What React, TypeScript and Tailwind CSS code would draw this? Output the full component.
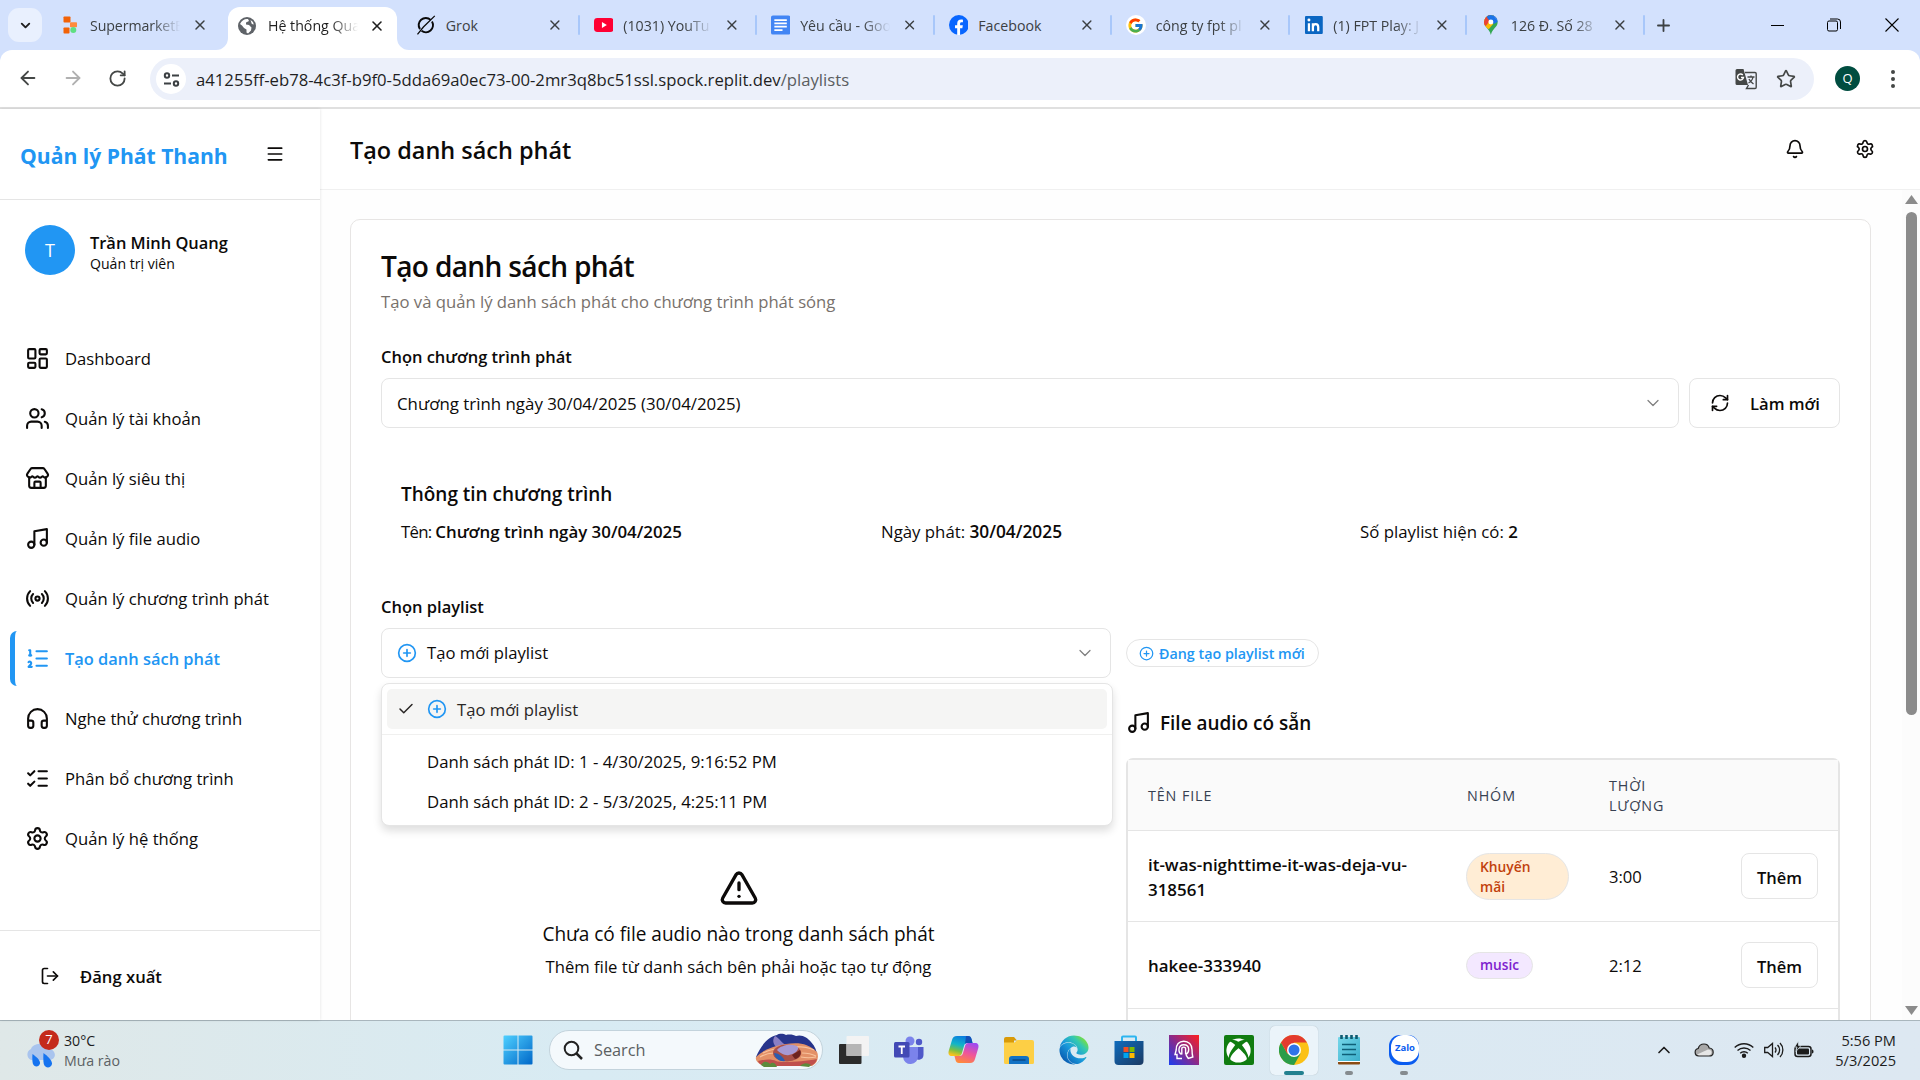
import type { ReactNode } from "react";
import {
  Bell, Check, ChevronDown, CirclePlus, Headphones, LayoutDashboard, ListChecks, ListOrdered,
  LogOut, Menu, Music, Radio, RefreshCw, Settings, Store, TriangleAlert, Users, X, Plus,
  ArrowLeft, ArrowRight, RotateCw, Star, ChevronUp,
} from "lucide-react";
import { FcGoogle } from "react-icons/fc";
import { FaEdge, FaXbox } from "react-icons/fa";

/* ---------- favicons ---------- */

const ReplitIcon = () => (
  <svg width="20" height="20" viewBox="0 0 20 20">
    <rect x="3.5" y="1.5" width="7" height="6" rx="0.8" fill="#f26207" />
    <rect x="10" y="7.2" width="7" height="5" rx="0.8" fill="#ff8a3c" />
    <rect x="3.5" y="12.5" width="6" height="6" rx="0.8" fill="#f26207" />
    <circle cx="13.3" cy="15" r="3" fill="#5fdf82" />
  </svg>
);

const GlobeIcon = () => (
  <svg width="20" height="20" viewBox="0 0 20 20">
    <circle cx="10" cy="10" r="9" fill="#5f6368" />
    <path d="M3 8c2-4 5-5.500 8-5l1 2-3 1.500v2l3 .5 2.500 2.500-.5 3-3 3-1.500-1v-3L7 12 5 9.500z" fill="#fff" />
    <path d="M13.500 4l2.500 2 .8 2.500-2-.5z" fill="#fff" />
  </svg>
);

const GrokIcon = () => (
  <svg width="20" height="20" viewBox="0 0 20 20" fill="none" stroke="#0a0a0a">
    <path d="M14.800 4.800A7.200 7.200 0 0 0 4 14.200M5.600 15.800A7.200 7.200 0 0 0 16.200 6.500" strokeWidth="2" />
    <path d="M1.500 19.500L7.500 12L19 .8" strokeWidth="1.300" />
  </svg>
);

const YoutubeIcon = () => (
  <svg width="20" height="20" viewBox="0 0 20 20">
    <rect x="0" y="3" width="20" height="14" rx="3.500" fill="#ff0033" />
    <path d="M8 7l5 3-5 3z" fill="#fff" />
  </svg>
);

const DocsIcon = () => (
  <svg width="20" height="20" viewBox="0 0 20 20">
    <rect x="0" y="0" width="20" height="20" rx="2" fill="#4285f4" />
    <path d="M3.500 4.800h13M3.500 8.300h13M3.500 11.800h13M3.500 15.300h8.500" stroke="#fff" strokeWidth="1.800" />
  </svg>
);

const FacebookIcon = () => (
  <svg width="20" height="20" viewBox="0 0 20 20">
    <circle cx="10" cy="10" r="10" fill="#0866ff" />
    <path d="M8.300 20v-6.800H6.100v-3h2.200V8.700c0-3 1.500-4.300 4-4.300.8 0 1.400.1 1.800.2v2.700h-1.300c-1.200 0-1.600.6-1.600 1.600v1.300h2.800l-.5 3h-2.300V20z" fill="#fff" />
  </svg>
);

const GoogleTabIcon = () => (
  <div className="flex h-5 w-5 items-center justify-center rounded-full bg-white">
    <FcGoogle size={17} />
  </div>
);

const LinkedinIcon = () => (
  <svg width="20" height="20" viewBox="0 0 20 20">
    <rect x="1" y="1" width="18" height="18" rx="1" fill="#0a66c2" />
    <path d="M5 8.200v8M9 16.200v-8M9 12c0-2 1-3 2.800-3s2.600 1.200 2.600 3.200v4" stroke="#fff" strokeWidth="2.300" fill="none" />
    <circle cx="5" cy="4.900" r="1.500" fill="#fff" />
  </svg>
);

const MapsIcon = () => (
  <svg width="20" height="20" viewBox="0 0 20 20">
    <defs>
      <clipPath id="pin">
        <path d="M10 0a7 7 0 0 1 7 7c0 5-5.300 6.300-7 13C8.300 13.300 3 12 3 7a7 7 0 0 1 7-7z" />
      </clipPath>
    </defs>
    <g clipPath="url(#pin)">
      <rect width="20" height="20" fill="#34a853" />
      <path d="M0 0h20L8 14 0 12z" fill="#fbbc04" />
      <path d="M0 0h9l1 4-5 7-5-2z" fill="#ea4335" />
      <path d="M5 0h15v5l-7 4-6-5z" fill="#1a73e8" />
      <path d="M12 0h8v7l-5-3z" fill="#4285f4" />
    </g>
    <circle cx="10" cy="7" r="2.500" fill="#fff" />
  </svg>
);

/* ---------- browser chrome ---------- */

const otherTabs: { icon: ReactNode; title: string; fade: boolean }[] = [
  { icon: <GrokIcon />, title: "Grok", fade: false },
  { icon: <YoutubeIcon />, title: "(1031) YouTu", fade: true },
  { icon: <DocsIcon />, title: "Yêu cầu - Goo", fade: true },
  { icon: <FacebookIcon />, title: "Facebook", fade: false },
  { icon: <GoogleTabIcon />, title: "công ty fpt pl", fade: true },
  { icon: <LinkedinIcon />, title: "(1) FPT Play: J", fade: true },
  { icon: <MapsIcon />, title: "126 Đ. Số 28", fade: true },
];

const fadeMask = "[mask-image:linear-gradient(to_right,#000_70%,transparent_100%)]";

function TabStrip() {
  return (
    <div className="flex h-[50px] bg-[#d3e1fd] text-[14.200px] text-[#3c4043]">
      <div className="mt-2 ml-2 flex h-[34px] w-[34px] items-center justify-center rounded-[11px] bg-[#e9f0fe]">
        <ChevronDown size={15} strokeWidth={3} color="#1f1f1f" />
      </div>
      <div className="flex h-[50px] w-[186px] items-center pl-[18px]">
        <ReplitIcon />
        <span className={`ml-2.5 w-[90px] pt-px tracking-[-0.100px] whitespace-nowrap ${fadeMask}`}>SupermarketB</span>
        <X className="ml-[12px]" size={16} strokeWidth={2.2} />
      </div>
      <div className="relative mt-[7px] flex h-[43px] w-[169px] items-center rounded-t-[12px] bg-white pb-[6px] pl-[9px] text-[#1f1f1f]">
        <svg className="absolute bottom-0 -left-3" width="12" height="12"><path d="M0 12A12 12 0 0 0 12 0V12z" fill="#fff" /></svg>
        <svg className="absolute -right-3 bottom-0" width="12" height="12"><path d="M12 12A12 12 0 0 1 0 0V12z" fill="#fff" /></svg>
        <GlobeIcon />
        <span className={`ml-[11px] w-[90px] pt-px whitespace-nowrap ${fadeMask}`}>Hệ thống Qua</span>
        <X className="ml-[11px]" size={16} strokeWidth={2.4} />
      </div>
      <div className="flex pl-[5px]">
        {otherTabs.map((t) => (
          <div key={t.title} className="flex h-[50px] w-[177.500px] items-center pl-[14px]">
            {t.icon}
            <span className={`ml-[10px] w-[90px] pt-px whitespace-nowrap ${t.fade ? fadeMask : ""}`}>{t.title}</span>
            <X className="ml-[12px]" size={16} strokeWidth={2.2} />
            <div className="ml-[15px] h-5 w-[2px] shrink-0 rounded bg-[#a8c7fa]" />
          </div>
        ))}
      </div>
      <div className="flex items-center pl-[9px]">
        <Plus size={19} strokeWidth={2.300} />
      </div>
      <div className="ml-auto flex items-center pr-[21px] text-black">
        <svg width="13" height="13"><path d="M0 6.500h13" stroke="currentColor" /></svg>
        <svg className="ml-[43px]" width="14" height="14" fill="none" stroke="currentColor">
          <rect x="0.500" y="3" width="10" height="10" rx="1.500" />
          <path d="M3 1h7.500a3 3 0 0 1 3 3v7" />
        </svg>
        <svg className="ml-[44px]" width="14" height="14"><path d="M.5 .5l13 13M13.500 .5l-13 13" stroke="currentColor" strokeWidth="1.100" /></svg>
      </div>
    </div>
  );
}

function Toolbar() {
  return (
    <div className="bg-[#d3e1fd]">
      <div className="flex h-[59px] items-start rounded-t-[12px] border-b-2 border-[#e0e0e0] bg-white pt-2">
        <div className="flex h-[42px] items-center pb-[2px] pl-[17px] text-[#444746]">
          <ArrowLeft size={22} strokeWidth={2} />
          <ArrowRight className="ml-[23px] text-[#b0b0b0]" size={22} strokeWidth={2} />
          <RotateCw className="ml-[24px]" size={19} strokeWidth={2.300} />
        </div>
        <div className="ml-[23px] flex h-[42px] w-[1664px] items-center rounded-full bg-[#ecf0fa]">
          <div className="ml-[6px] flex h-[30px] w-[30px] items-center justify-center rounded-full bg-white">
            <svg width="17" height="17" fill="none" stroke="#3c4043" strokeWidth="2">
              <circle cx="4" cy="4.500" r="2.200" /><path d="M9 4.500h7M1 12.500h7" /><circle cx="13" cy="12.500" r="2.200" />
            </svg>
          </div>
          <span className="ml-[10px] pt-[2px] text-[16.700px] text-[#1f1f1f]">
            a41255ff-eb78-4c3f-b9f0-5dda69a0ec73-00-2mr3q8bc51ssl.spock.replit.dev<span className="text-[#5a5d60]">/playlists</span>
          </span>
          <svg className="ml-auto" width="22" height="22" viewBox="0 0 22 22">
            <path d="M2 1h6.500l4.500 16H2a1.500 1.500 0 0 1-1.500-1.500v-13A1.500 1.500 0 0 1 2 1z" fill="#444746" />
            <path d="M10 4.500h10a1.200 1.200 0 0 1 1.200 1.200v13.600a1.200 1.200 0 0 1-1.200 1.200h-8.500l2-3.500" fill="none" stroke="#444746" strokeWidth="1.400" />
            <path d="M7.800 7A3 3 0 1 0 8.500 9.500H6" fill="none" stroke="#fff" strokeWidth="1.400" />
            <path d="M12.500 9h7M16 7.500V9M18 9c-.5 3-2.500 5-4.500 6M14 11c.8 2 2.500 3.500 4.500 5" fill="none" stroke="#444746" strokeWidth="1.300" />
          </svg>
          <Star className="mr-[18px] ml-[19px]" size={20} strokeWidth={2} color="#444746" />
        </div>
        <div className="mt-2 ml-[21px] flex h-[25px] w-[25px] items-center justify-center rounded-full bg-[#004d40] text-[13px] text-white">Q</div>
        <svg className="mt-[11px] ml-[30px]" width="6" height="20" fill="#444746">
          <circle cx="3" cy="3" r="2" /><circle cx="3" cy="10" r="2" /><circle cx="3" cy="17" r="2" />
        </svg>
      </div>
    </div>
  );
}

/* ---------- application ---------- */

const navItems = [
  { icon: LayoutDashboard, label: "Dashboard" },
  { icon: Users, label: "Quản lý tài khoản" },
  { icon: Store, label: "Quản lý siêu thị" },
  { icon: Music, label: "Quản lý file audio" },
  { icon: Radio, label: "Quản lý chương trình phát" },
  { icon: ListOrdered, label: "Tạo danh sách phát", active: true },
  { icon: Headphones, label: "Nghe thử chương trình" },
  { icon: ListChecks, label: "Phân bổ chương trình" },
  { icon: Settings, label: "Quản lý hệ thống" },
];

function Sidebar() {
  return (
    <aside className="z-10 flex w-[320px] shrink-0 flex-col bg-white shadow-[0_0_3px_rgba(0,0,0,0.120)]">
      <div className="flex h-[91px] items-center border-b border-[#e5e5e5] pl-5">
        <span className="w-[245px] pt-[4px] text-[21.100px] font-bold text-[#2196f3]">Quản lý Phát Thanh</span>
        <Menu size={20} strokeWidth={2} />
      </div>
      <div className="flex h-[100px] items-center pl-[25px]">
        <div className="flex h-[50px] w-[50px] items-center justify-center rounded-full bg-[#2196f3] text-[18px] text-white">T</div>
        <div className="ml-[15px] pt-[4px]">
          <div className="text-[16.430px] leading-[23px] font-semibold">Trần Minh Quang</div>
          <div className="text-[14.100px] leading-5">Quản trị viên</div>
        </div>
      </div>
      <nav className="mt-[30px] flex flex-col gap-[5px] pt-px pl-[10px]">
        {navItems.map(({ icon: Icon, label, active }) => (
          <div
            key={label}
            className={
              active
                ? "flex h-[55px] items-center rounded-[7px] border-l-[5px] border-[#2196f3] pl-[10px] text-[16.430px] font-semibold text-[#2196f3]"
                : "flex h-[55px] items-center pl-[15px] text-[16.650px]"
            }
          >
            <Icon size={25} strokeWidth={2} />
            <span className="ml-[15px] pt-[2px]">{label}</span>
          </div>
        ))}
      </nav>
      <div className="mt-auto flex h-[90px] items-center border-t border-[#e5e5e5] pl-[40px]">
        <LogOut size={20} strokeWidth={2} />
        <span className="ml-[20px] pt-[4px] text-[16.650px] font-semibold">Đăng xuất</span>
      </div>
    </aside>
  );
}

const audioFiles = [
  { name: ["it-was-nighttime-it-was-deja-vu-", "318561"], group: "Khuyến mãi", time: "3:00", tall: true },
  { name: ["hakee-333940"], group: "music", time: "2:12", tall: false },
];

const cols = "grid grid-cols-[319px_142px_113px_136px]";

function AudioTable() {
  return (
    <div className="mt-[21px] rounded-t-[7px] border-2 border-b-0 border-[#e5e5e5]">
      <div className={`${cols} h-[71px] items-center border-b border-[#e5e5e5] bg-[#fafafa] pt-[2px] text-[14.300px] leading-5 tracking-[0.900px] text-[#374151]`}>
        <div className="pl-5 font-medium">TÊN FILE</div>
        <div className="pl-5 font-medium">NHÓM</div>
        <div className="w-[80px] pl-5 font-medium">THỜI LƯỢNG</div>
      </div>
      {audioFiles.map((f) => (
        <div key={f.time} className={`${cols} ${f.tall ? "h-[91px]" : "h-[87px]"} items-center border-b border-[#e5e5e5] text-[16.930px] leading-[25px]`}>
          <div className="pt-px pl-5 font-semibold">
            {f.name.map((n) => (
              <div key={n} className="whitespace-nowrap">{n}</div>
            ))}
          </div>
          <div className="flex pl-[19px]">
            {f.tall ? (
              <span className="flex h-[47px] w-[103px] items-center rounded-full border border-[#e5e5e5] bg-[#ffedd5] pt-px pr-[30px] pl-[13px] text-[13.800px] leading-5 font-semibold text-[#c2410c]">
                {f.group}
              </span>
            ) : (
              <span className="flex h-[27px] items-center rounded-full border border-[#e5e5e5] bg-[#f3e8ff] px-[13px] text-[13.700px] leading-5 font-semibold text-[#7e22ce]">
                {f.group}
              </span>
            )}
          </div>
          <div className="pt-px pl-5 text-[16.600px]">{f.time}</div>
          <div className="flex justify-end pr-5">
            <button className="h-[46px] w-[77px] rounded-[8px] border border-[#e5e5e5] bg-white pt-[2px] text-[16.500px] font-semibold">Thêm</button>
          </div>
        </div>
      ))}
      <div className="h-[14px]" />
    </div>
  );
}

function PlaylistMenu() {
  return (
    <div className="absolute top-[55px] left-0 z-20 h-[143px] w-[732px] rounded-[8px] border border-[#e5e5e5] bg-white shadow-[0_5px_8px_rgba(0,0,0,0.130)]">
      <div className="mx-[5px] mt-[5px] flex h-[40px] items-center rounded-[5px] bg-[#f5f5f4] pl-[10px] text-[16.650px] text-[#292524]">
        <Check size={18} strokeWidth={2} />
        <CirclePlus className="ml-[12px]" size={20} color="#2196f3" strokeWidth={2} />
        <span className="ml-[10px] pt-[3px]">Tạo mới playlist</span>
      </div>
      <div className="mt-[5px] mb-[7px] h-px bg-[#f0f0ef]" />
      <div className="pl-[45px] text-[16.750px] leading-[40px]">
        <div>Danh sách phát ID: 1 - 4/30/2025, 9:16:52 PM</div>
        <div>Danh sách phát ID: 2 - 5/3/2025, 4:25:11 PM</div>
      </div>
    </div>
  );
}

function Card() {
  return (
    <section className="mt-[29px] ml-[30px] h-[900px] w-[1521px] rounded-[10px] border border-[#e7e5e4] bg-white px-[30px] pt-[29px]">
      <h2 className="text-[28.100px] leading-[34px] font-semibold tracking-[-0.680px]">Tạo danh sách phát</h2>
      <p className="mt-[6px] text-[16.680px] leading-[25px] text-[#78716c]">Tạo và quản lý danh sách phát cho chương trình phát sóng</p>

      <div className="mt-[30px] text-[16.480px] leading-[25px] font-semibold">Chọn chương trình phát</div>
      <div className="mt-[9px] flex gap-[10px]">
        <div className="flex h-[50px] w-[1298px] items-center justify-between rounded-[8px] border border-[#e5e5e5] px-[15px] text-[16.860px]">
          <span className="pt-[2px]">Chương trình ngày 30/04/2025 (30/04/2025)</span>
          <ChevronDown size={20} strokeWidth={1.500} color="#808080" />
        </div>
        <button className="flex h-[50px] w-[151px] items-center rounded-[8px] border border-[#e5e5e5] pl-[20px] text-[16.600px] font-semibold">
          <RefreshCw size={20} strokeWidth={2} />
          <span className="ml-[20px] pt-[2px]">Làm mới</span>
        </button>
      </div>

      <div className="mt-[51px] pl-[20px]">
        <div className="text-[18.980px] leading-[30px] font-semibold">Thông tin chương trình</div>
        <div className="mt-[10px] grid grid-cols-[480px_479px_1fr] text-[16.800px] leading-[25px]">
          <div><span className="tracking-[-0.700px]">Tên: </span><b className="text-[16.880px] font-semibold">Chương trình ngày 30/04/2025</b></div>
          <div>Ngày phát: <b className="text-[17.300px] font-semibold">30/04/2025</b></div>
          <div>Số playlist hiện có: <b className="font-semibold">2</b></div>
        </div>
      </div>

      <div className="mt-[50px] text-[16.500px] leading-[25px] font-semibold">Chọn playlist</div>
      <div className="mt-[9px] flex items-center gap-[15px]">
        <div className="relative">
          <div className="flex h-[50px] w-[730px] items-center rounded-[8px] border border-[#e5e5e5] pl-[15px] text-[16.650px]">
            <CirclePlus size={20} color="#2196f3" strokeWidth={2} />
            <span className="ml-[10px] pt-px">Tạo mới playlist</span>
            <ChevronDown className="mr-[15px] ml-auto" size={20} strokeWidth={1.500} color="#808080" />
          </div>
          <PlaylistMenu />
        </div>
        <span className="flex h-[28px] items-center rounded-full border border-[#e5e5e5] pr-[13px] pl-[12px] text-[14.300px] font-semibold text-[#2196f3]">
          <CirclePlus size={15} strokeWidth={2} />
          <span className="ml-[5px] pt-[2px]">Đang tạo playlist mới</span>
        </span>
      </div>

      <div className="mt-[29px] flex gap-[30px]">
        <div className="flex w-[715px] shrink-0 flex-col items-center pt-[161px]">
          <TriangleAlert size={40} strokeWidth={2} />
          <div className="mt-[11px] text-[19.050px] leading-[30px]">Chưa có file audio nào trong danh sách phát</div>
          <div className="mt-[5px] text-[16.670px] leading-[25px]">Thêm file từ danh sách bên phải hoặc tạo tự động</div>
        </div>
        <div className="w-[714px] shrink-0">
          <div className="flex h-[30px] items-center text-[18.950px] font-semibold">
            <Music size={25} strokeWidth={2} />
            <span className="ml-[9px] pt-[3px]">File audio có sẵn</span>
          </div>
          <AudioTable />
        </div>
      </div>
    </section>
  );
}

function Main() {
  return (
    <div className="flex min-w-0 flex-1 flex-col">
      <header className="flex h-[81px] shrink-0 items-center border-b border-[#f0f0f0] bg-white pl-[30px] text-[23.450px] font-semibold">
        <span className="pt-[4px]">Tạo danh sách phát</span>
        <Bell className="mr-[50px] ml-auto" size={20} strokeWidth={2} />
        <Settings className="mr-[45px]" size={20} strokeWidth={2} />
      </header>
      <div className="flex min-h-0 flex-1 overflow-hidden bg-[#fefefe]">
        <Card />
        <div className="ml-auto flex w-[18px] flex-col items-center bg-[#fcfcfc] pt-[5px] pb-[5px]">
          <svg width="13" height="9"><path d="M6.500 0L13 9H0z" fill="#8b8b8b" /></svg>
          <div className="mt-[8px] h-[503px] w-[11px] rounded-full bg-[#8b8b8b]" />
          <svg className="mt-auto" width="13" height="9"><path d="M6.500 9L13 0H0z" fill="#8b8b8b" /></svg>
        </div>
      </div>
    </div>
  );
}

/* ---------- taskbar ---------- */

const WindowsIcon = () => (
  <svg width="30" height="30" viewBox="0 0 30 30">
    <defs><linearGradient id="win" x1="0" y1="0" x2="1" y2="1"><stop offset="0" stopColor="#4fd0ff" /><stop offset="1" stopColor="#0067c8" /></linearGradient></defs>
    <path d="M1.500.5h13v14H.5v-13a1 1 0 0 1 1-1zM15.500.5h13a1 1 0 0 1 1 1v13h-14zM.5 15.500h14v14h-13a1 1 0 0 1-1-1zM15.500 15.500h14v13a1 1 0 0 1-1 1h-13z" fill="url(#win)" />
  </svg>
);

const CanyonArt = () => (
  <svg width="64" height="35" viewBox="0 0 64 35">
    <path d="M1 24C6 12 14 3 22 2c3-2 7-1 9 0 4-1 8 0 10 1 6-2 12 2 15 6 4 4 6 9 6 14z" fill="#27348b" />
    <path d="M20 3c5 2 6 8 14 10l-12 2c-4-4-5-8-2-12z" fill="#8a7fc4" />
    <path d="M1 24c8-8 18-11 30-13 12-2 22-1 31 8 2 4 1 11-5 14H9C4 31 0 28 1 24z" fill="#e39168" />
    <path d="M3 28c8-2 14-2 18 0s26 1 41-2c-1 4-4 6-7 7H10c-4-1-6-2-7-5z" fill="#c0504d" />
    <path d="M8 20c12-6 38-9 51-3M5 24c5-3 10-4 14-4M47 20c5 0 10 1 14 3M46 24c5 1 10 1 15 0" stroke="#f8c29c" strokeWidth="1.200" fill="none" />
    <ellipse cx="32" cy="20" rx="14" ry="8.500" fill="#a8504a" />
    <path d="M22 17c4-5 16-7 21-3 1 4-4 7-9 8-4 1-9-2-12-5z" fill="#a69ad6" />
    <path d="M19 20c5 0 9 4 11 8-5 1-10-2-11-8z" fill="#2a5db0" />
    <path d="M37 22l8-5c2 3 0 8-5 9z" fill="#6d2320" />
    <path d="M6 32c3-5 7-3 9-1 3-3 6 0 7 3H9zM45 33c4-4 8-3 11-1l-2 2z" fill="#5d8a3c" />
  </svg>
);

const TaskViewIcon = () => (
  <svg width="30" height="30" viewBox="0 0 30 30">
    <rect x="0" y="9" width="22.500" height="20" rx="1" fill="#2b2b2b" />
    <rect x="7.500" y="1" width="22.500" height="20" rx="1" fill="#f3f3f3" />
    <rect x="7.500" y="9" width="15" height="12" fill="#b5b5b5" />
  </svg>
);

const TeamsIcon = () => (
  <svg width="30" height="30" viewBox="0 0 30 30">
    <circle cx="25" cy="7" r="3.200" fill="#5059c9" />
    <circle cx="16" cy="6" r="4.500" fill="#7b83eb" />
    <path d="M20 12h9.500v8a5 5 0 0 1-9.500 2z" fill="#5059c9" />
    <path d="M9 12h15v9a7.500 7.500 0 0 1-15 1z" fill="#7b83eb" />
    <rect x="0" y="7" width="15.500" height="15.500" rx="1.500" fill="#4249b5" />
    <path d="M4.500 11.500h6.500M7.750 11.500v7.500" stroke="#fff" strokeWidth="1.800" />
  </svg>
);

const CopilotIcon = () => (
  <svg width="31" height="30" viewBox="0 0 31 30">
    <defs>
      <linearGradient id="cpA" x1="0.600" y1="0" x2="0.300" y2="1"><stop offset="0" stopColor="#0a7be0" /><stop offset="0.450" stopColor="#12b5c8" /><stop offset="0.750" stopColor="#7bc043" /><stop offset="1" stopColor="#ffc21c" /></linearGradient>
      <linearGradient id="cpB" x1="0.700" y1="0" x2="0.300" y2="1"><stop offset="0" stopColor="#a04bf0" /><stop offset="0.500" stopColor="#f0559a" /><stop offset="1" stopColor="#ff8a3a" /></linearGradient>
    </defs>
    <path d="M9 1h11c2 0 3 1 3.500 3l1 4h-5c-2 0-3 1-3.500 3l-2 7c-.6 2-1.500 3-3.500 3H4c-3 0-4-2-3.300-5L4 5c.8-2.500 2-4 5-4z" fill="url(#cpA)" />
    <path d="M18 1h2c2 0 3 1 3.500 3l1 4h-5c-1 0-2 .4-2.500 1z" fill="#1350b8" />
    <path d="M22 28H11c-2 0-3-1-3.500-3l-1-4h5c2 0 3-1 3.500-3l2-7c.6-2 1.500-3 3.500-3h6.500c3 0 4 2 3.300 5L27 24c-.8 2.500-2 4-5 4z" fill="url(#cpB)" />
  </svg>
);

const FolderIcon = () => (
  <svg width="30" height="30" viewBox="0 0 30 30">
    <path d="M0 4a2 2 0 0 1 2-2h8l3 3.500h-3V12H0z" fill="#d99a08" />
    <path d="M0 7.500h10.500l3-2.500H28a2 2 0 0 1 2 2v20.500a1.500 1.500 0 0 1-1.500 1.500h-27A1.500 1.500 0 0 1 0 27.500z" fill="#fdcf45" />
    <path d="M5 29v-5a3 3 0 0 1 3-3h14a3 3 0 0 1 3 3v5z" fill="#1272c4" />
    <path d="M8.500 25h13" stroke="#0b4a86" strokeWidth="1.500" />
  </svg>
);

const EdgeIcon = () => (
  <svg width="30" height="30" viewBox="0 0 512 512">
    <defs>
      <linearGradient id="edge" x1="0.150" y1="0.850" x2="0.850" y2="0.150"><stop offset="0" stopColor="#0a5fb4" /><stop offset="0.450" stopColor="#1a9bdc" /><stop offset="0.800" stopColor="#35c9b0" /><stop offset="1" stopColor="#6fdc4f" /></linearGradient>
    </defs>
    <FaEdge size={512} style={{ fill: "url(#edge)" }} />
  </svg>
);

const StoreIcon = () => (
  <svg width="30" height="30" viewBox="0 0 30 30">
    <defs><linearGradient id="store" x1="0" y1="0" x2="1" y2="1"><stop offset="0" stopColor="#0f6cbd" /><stop offset="1" stopColor="#1b3a63" /></linearGradient></defs>
    <path d="M8 7V2.500a1 1 0 0 1 1-1h12a1 1 0 0 1 1 1V7" fill="none" stroke="#2cb5f0" strokeWidth="2" />
    <path d="M.5 6h29v20a4 4 0 0 1-4 4h-21a4 4 0 0 1-4-4z" fill="url(#store)" />
    <path d="M9.500 12h5v5h-5z" fill="#f25022" /><path d="M15.500 12h5v5h-5z" fill="#7fba00" />
    <path d="M9.500 18h5v5h-5z" fill="#00a4ef" /><path d="M15.500 18h5v5h-5z" fill="#ffb900" />
  </svg>
);

const HeadIcon = () => (
  <svg width="30" height="30" viewBox="0 0 30 30">
    <defs><linearGradient id="head" x1="0" y1="1" x2="1" y2="0"><stop offset="0" stopColor="#1a3ef0" /><stop offset="0.500" stopColor="#8a2a8a" /><stop offset="1" stopColor="#ff1f1f" /></linearGradient></defs>
    <rect width="30" height="30" fill="url(#head)" />
    <path
      d="M13 23.500H8v-4H6l1.200-4.500C7 9.500 10 6.200 14.800 6.200S23 9.800 23 14.500c0 3 .2 5 .8 7.500l-4.500 1.500-2.300-3.500M12.500 19.500C10 18 9.800 15.800 10 14c.4-2.800 2.400-4.200 4.700-4.200 3 0 5 2 5 4.800 0 2.400-1.200 4.200-3 4.900M12.800 19.500v-5.700c0-2.200 3.800-2.200 3.800 0v5.700"
      fill="none"
      stroke="#fff"
      strokeWidth="1.400"
    />
  </svg>
);

const XboxIcon = () => (
  <div className="flex h-[30px] w-[30px] items-center justify-center rounded-[2px] bg-[#107c10] text-white">
    <FaXbox size={25} />
  </div>
);

const ChromeIcon = () => (
  <svg width="30" height="30" viewBox="0 0 30 30">
    <circle cx="15" cy="15" r="15" fill="#fbc116" />
    <path d="M2 7.500A15 15 0 0 0 15 30l6.500-11.250L15 15l-6.500 3.750z" fill="#2a9d49" />
    <path d="M28 7.500H15L8.500 18.750 2 7.500A15 15 0 0 1 28 7.500z" fill="#e33b2e" />
    <circle cx="15" cy="15" r="7" fill="#fff" />
    <circle cx="15" cy="15" r="5.500" fill="#2f74e8" />
  </svg>
);

const NotepadIcon = () => (
  <svg width="24" height="30" viewBox="0 0 24 30">
    <defs><linearGradient id="note" x1="0" y1="0" x2="1" y2="1"><stop offset="0" stopColor="#76d7ea" /><stop offset="1" stopColor="#3aaecb" /></linearGradient></defs>
    <rect x="1" y="26" width="22" height="3.500" rx="1" fill="#8a4b14" />
    <rect x="1" y="2" width="22" height="25" rx="1" fill="url(#note)" />
    <path d="M1 26.500h22" stroke="#fff" />
    <path d="M5 9.500h14M5 14.500h14M5 19.500h14" stroke="#0f5f78" strokeWidth="1.700" />
    <path d="M4.500 0v4M9.500 0v4M14.500 0v4M19.500 0v4" stroke="#0d5a70" strokeWidth="2.600" />
  </svg>
);

const ZaloIcon = () => (
  <div className="relative h-[30px] w-[30px] rounded-[11px] bg-[#0a5cf0]">
    <div className="absolute top-0 right-0 flex h-[27px] w-[28px] items-center justify-center rounded-[12px] bg-white text-[9.500px] font-bold text-[#0a5cf0]">
      Zalo
    </div>
  </div>
);

const pinnedApps = [
  { id: "taskview", icon: <TaskViewIcon /> },
  { id: "teams", icon: <TeamsIcon /> },
  { id: "copilot", icon: <CopilotIcon /> },
  { id: "folder", icon: <FolderIcon /> },
  { id: "edge", icon: <EdgeIcon /> },
  { id: "store", icon: <StoreIcon /> },
  { id: "head", icon: <HeadIcon /> },
  { id: "xbox", icon: <XboxIcon /> },
  { id: "chrome", icon: <ChromeIcon />, state: "active" },
  { id: "notepad", icon: <NotepadIcon />, state: "open" },
  { id: "zalo", icon: <ZaloIcon />, state: "open" },
];

function Taskbar() {
  return (
    <footer className="flex h-[60px] shrink-0 border-t border-[#a9b6bd] bg-linear-to-r from-[#dfe8e8] via-[#d8ebf3] via-30% to-[#dde8f2]">
      <div className="flex w-[503px] items-center pl-[25px]">
        <div className="relative h-[36px] w-[34px]">
          <svg className="absolute top-[9px] left-0" width="31" height="26" viewBox="0 0 31 26">
            <path d="M6 18a6 6 0 0 1 0-11C8 1 20 0 23 7c9 0 9 11 1 11z" fill="#a9c4ee" />
            <path d="M7.500 12c4 3 8 6 7.500 9.500-1 4-6 4-7.200 0-.6-3-.6-6-.3-9.500zM18.500 11c4 3 9 7.500 8.500 11-1 4.500-7 4.500-8.200 0-.6-3-.6-7-.3-11z" fill="#1674f0" />
          </svg>
          <div className="absolute -top-[3px] left-[14px] flex h-5 w-5 items-center justify-center rounded-full bg-[#c42b1c] text-[13px] text-white">7</div>
        </div>
        <div className="ml-[5px] text-[14.200px] leading-5">
          <div className="text-[#1c1c1c]">30°C</div>
          <div className="text-[#5c6164]">Mưa rào</div>
        </div>
      </div>
      <div className="flex items-center pb-px"><WindowsIcon /></div>
      <div className="mt-[9px] ml-[16px] flex h-[40px] w-[274px] items-center rounded-full border border-[#c3d3dc] bg-[#f4f9fc] pr-[3px] pl-[13px]">
        <svg width="20" height="20" fill="none" stroke="#222" strokeWidth="2"><circle cx="8.500" cy="8.500" r="6.800" /><path d="M13.500 13.500l5.500 5.500" strokeWidth="2.500" /></svg>
        <span className="ml-[11px] pt-px text-[16.300px] text-[#5b5f62]">Search</span>
        <span className="ml-auto"><CanyonArt /></span>
      </div>
      <div className="ml-[3px] flex">
        {pinnedApps.map((a) => (
          <div key={a.id} className="flex w-[55.050px] justify-center pt-[5px]">
            <div className={`relative flex h-[49px] w-[48px] items-center justify-center pb-px ${a.state === "active" ? "rounded-[5px] bg-[#ebf4fa] shadow-[0_0_1px_rgba(0,0,0,0.250)]" : ""}`}>
              {a.icon}
              {a.state === "active" && <div className="absolute bottom-0 h-[4px] w-5 rounded-full bg-[#23808f]" />}
              {a.state === "open" && <div className="absolute bottom-0 h-[4px] w-2 rounded-full bg-[#858b8f]" />}
            </div>
          </div>
        ))}
      </div>
      <div className="ml-auto flex items-center pr-[24px] pb-[2px] text-[#1c1c1c]">
        <ChevronUp size={20} strokeWidth={2} />
        <svg className="ml-[20px]" width="20" height="14" viewBox="0 0 20 14">
          <path d="M4.500 13a3.800 3.800 0 0 1-.3-7.500C5 2.500 7.500 1 10 1s4.500 1.500 5.200 4c5.300.5 5.300 8 0 8z" fill="#a8a8a8" stroke="#222" strokeWidth="1.200" />
          <path d="M3 11.500L14 6.500c4 0 5 5 1 5.700H5z" fill="#e6e6e6" />
        </svg>
        <svg className="ml-[20px]" width="20" height="16" viewBox="0 0 20 16" fill="none" stroke="currentColor" strokeWidth="1.400">
          <path d="M.7 5.500a13.500 13.500 0 0 1 18.600 0M3.500 8.500a9.500 9.500 0 0 1 13 0M6.200 11.300a5.500 5.500 0 0 1 7.600 0" />
          <circle cx="10" cy="13.700" r="1.500" fill="currentColor" />
        </svg>
        <svg className="ml-[10px]" width="20" height="18" viewBox="0 0 20 18" fill="none" stroke="currentColor" strokeWidth="1.300">
          <path d="M.7 6.500v5h3L8.500 15.500v-13L3.700 6.500zM11 6.500a4 4 0 0 1 0 5M13.500 4a7 7 0 0 1 0 10M16 2a10 10 0 0 1 0 14" />
        </svg>
        <svg className="ml-[10px]" width="20" height="18" viewBox="0 0 20 18">
          <rect x="1" y="5.500" width="16" height="10" rx="2.500" fill="none" stroke="currentColor" strokeWidth="1.500" />
          <rect x="3" y="7.500" width="12" height="6" rx="1" fill="currentColor" />
          <path d="M18 8.500c2 0 2 4 0 4z" fill="currentColor" />
          <path d="M4.500 0L.5 6h2.500l-1 4.500L7 4.500H4.500z" fill="currentColor" stroke="#dbe9f2" strokeWidth="0.700" />
        </svg>
        <div className="ml-[21px] text-right text-[14.600px] leading-5">
          <div>5:56 PM</div>
          <div>5/3/2025</div>
        </div>
      </div>
    </footer>
  );
}

export default function App() {
  return (
    <div className="flex h-[1080px] w-[1920px] flex-col overflow-hidden bg-white font-['Open_Sans',sans-serif] text-[#0c0a09]">
      <TabStrip />
      <Toolbar />
      <div className="flex h-[911px] shrink-0">
        <Sidebar />
        <Main />
      </div>
      <Taskbar />
    </div>
  );
}
